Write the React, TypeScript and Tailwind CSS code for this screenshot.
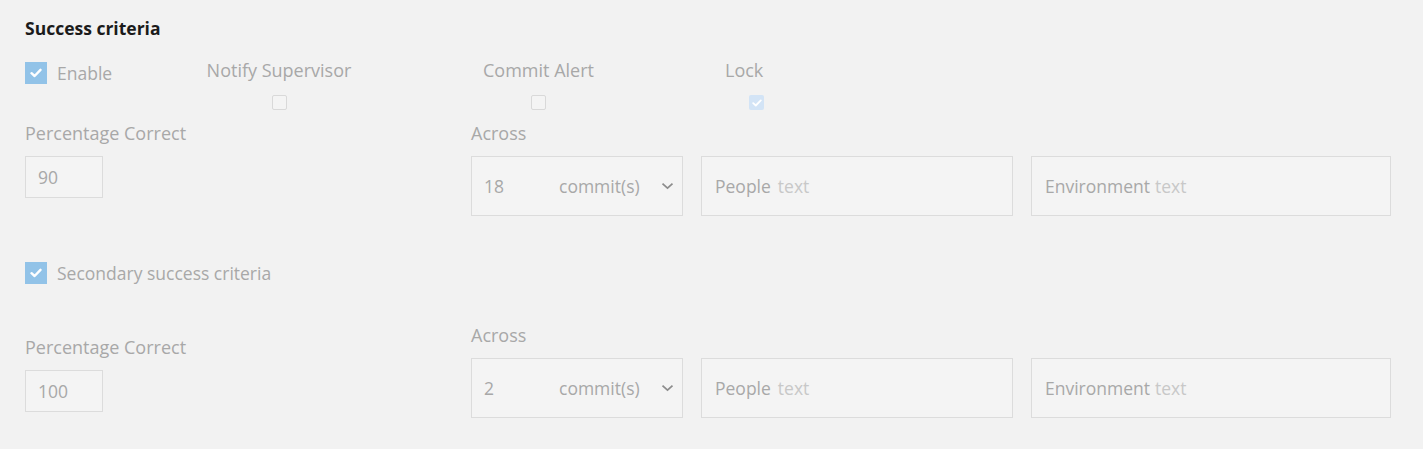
import React from 'react'

const font = { fontFamily: '"Open Sans", "Noto Sans", sans-serif' }

function BigCheck({ label }: { label: string }) {
  return (
    <div className="flex items-center">
      <span className="flex h-[22px] w-[22px] items-center justify-center bg-[#92c3e8]">
        <svg width="12" height="10" viewBox="0 0 12 10">
          <path d="M1.5 5.2 L4.6 8 L10.5 1.8" fill="none" stroke="#fff" strokeWidth="2.4" strokeLinecap="round" strokeLinejoin="round" />
        </svg>
      </span>
      <span className="ml-[10px] text-[17.5px] leading-6 text-[#a8a8a8]">{label}</span>
    </div>
  )
}

function SmallCheck({ checked = false }: { checked?: boolean }) {
  if (checked) {
    return (
      <span className="flex h-[15px] w-[15px] items-center justify-center rounded-[2px] bg-[#d3e4f6]">
        <svg width="10" height="8" viewBox="0 0 10 8">
          <path d="M1.2 4.2 L3.8 6.5 L8.8 1.4" fill="none" stroke="#fff" strokeWidth="1.8" strokeLinecap="round" strokeLinejoin="round" />
        </svg>
      </span>
    )
  }
  return <span className="block h-[15px] w-[15px] rounded-[2px] border border-[#d9d9d9] bg-[#f4f4f4]" />
}

function Column({ label, checked, width, end }: { label: string; checked?: boolean; width: string; end?: boolean }) {
  return (
    <div className={`flex flex-col ${end ? 'items-end' : 'items-center'} ${width}`}>
      <span className={`text-[18px] leading-6 text-[#a8a8a8] ${end ? 'self-start' : ''}`}>{label}</span>
      <div className={`mt-[13px] ${end ? 'mr-[-1px]' : ''}`}>
        <SmallCheck checked={checked} />
      </div>
    </div>
  )
}

function CriteriaRow({ percent, commits, offset }: { percent: string; commits: string; offset?: boolean }) {
  return (
    <div className="flex">
      <div className={`w-[446px] ${offset ? 'mt-[12px]' : ''}`}>
        <div className="text-[18px] leading-6 text-[#a8a8a8]">Percentage Correct</div>
        <div className="mt-[11px] flex h-[42px] w-[78px] items-center border border-[#dcdcdc] bg-[#f4f4f4] px-3 text-[17.5px] text-[#a8a8a8]">
          {percent}
        </div>
      </div>
      <div>
        <div className="text-[18px] leading-6 text-[#a8a8a8]">Across</div>
        <div className="mt-[11px] flex gap-[18px]">
          <div className="flex h-[60px] w-[212px] items-center border border-[#dcdcdc] bg-[#f4f4f4] pl-3 pr-[8px] text-[17.5px] text-[#a8a8a8]">
            <span className="w-[75px]">{commits}</span>
            <span className="flex-1">commit(s)</span>
            <svg width="13" height="8" viewBox="0 0 13 8">
              <path d="M1.5 1.6 L6.5 6.2 L11.5 1.6" fill="none" stroke="#8c8c8c" strokeWidth="1.7" />
            </svg>
          </div>
          <div className="flex h-[60px] w-[312px] items-center border border-[#dcdcdc] bg-[#f4f4f4] px-[13px] text-[17.5px]">
            <span className="text-[#a8a8a8]">People</span>
            <span className="ml-[7px] text-[#c8c8c8]">text</span>
          </div>
          <div className="flex h-[60px] w-[360px] items-center border border-[#dcdcdc] bg-[#f4f4f4] px-[13px] text-[17.5px]">
            <span className="text-[#a8a8a8]">Environment</span>
            <span className="ml-[5px] text-[#c8c8c8]">text</span>
          </div>
        </div>
      </div>
    </div>
  )
}

export default function App() {
  return (
    <div className="min-h-[449px] w-full bg-[#f2f2f2] pl-[25px] pt-[16px]" style={font}>
      <h2 className="text-[17.5px] font-bold leading-6 text-[#1b1b1b]">Success criteria</h2>

      <div className="mt-[18px] flex">
        <div className="w-[181px] pt-[3px]">
          <BigCheck label="Enable" />
        </div>
        <Column label="Notify Supervisor" width="w-[146px]" />
        <div className="ml-[130px]">
          <Column label="Commit Alert" width="w-[113px]" />
        </div>
        <div className="ml-[130px]">
          <Column label="Lock" checked end width="w-[38px]" />
        </div>
      </div>

      <div className="mt-[11px]">
        <CriteriaRow percent="90" commits="18" />
      </div>

      <div className="mt-[45px]">
        <BigCheck label="Secondary success criteria" />
      </div>

      <div className="mt-[38px]">
        <CriteriaRow percent="100" commits="2" offset />
      </div>
    </div>
  )
}
